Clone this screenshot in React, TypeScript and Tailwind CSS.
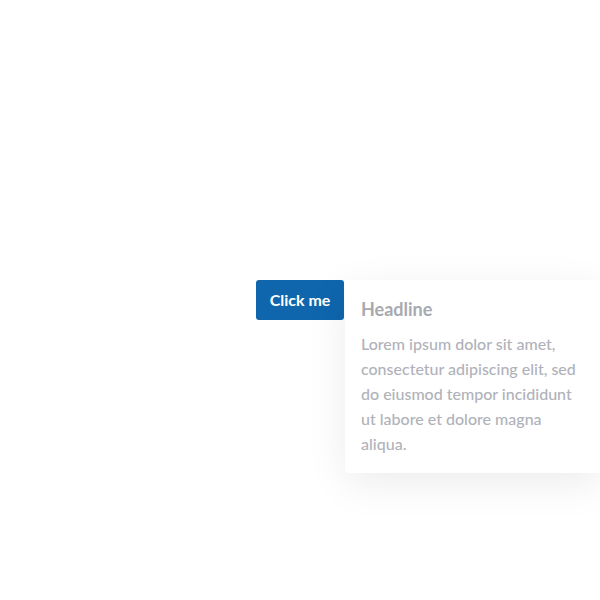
import React from 'react';

export default function App() {
  return (
    <div className="w-[600px] h-[600px] bg-white flex items-center justify-center overflow-hidden" style={{ fontFamily: 'Lato, "Open Sans", sans-serif' }}>
      <div className="relative">
        <button className="w-[88px] h-[40px] rounded-[3px] bg-[#0f66ad] text-white text-[16px] font-bold flex items-center justify-center">
          Click me
        </button>
        <div className="absolute left-[89px] top-0 w-[256px] rounded-[4px] bg-white px-4 pt-[17px] pb-[17px] shadow-[0_10px_40px_rgba(0,0,0,0.08)]">
          <h3 className="text-[18px] font-bold leading-[24px] text-[#a7a9b1]">Headline</h3>
          <p className="mt-[10px] w-[220px] text-[16px] leading-[25px] font-medium text-[#b0b2ba]">
            Lorem ipsum dolor sit amet, consectetur adipiscing elit, sed do eiusmod tempor incididunt ut labore et dolore magna aliqua.
          </p>
        </div>
      </div>
    </div>
  );
}
